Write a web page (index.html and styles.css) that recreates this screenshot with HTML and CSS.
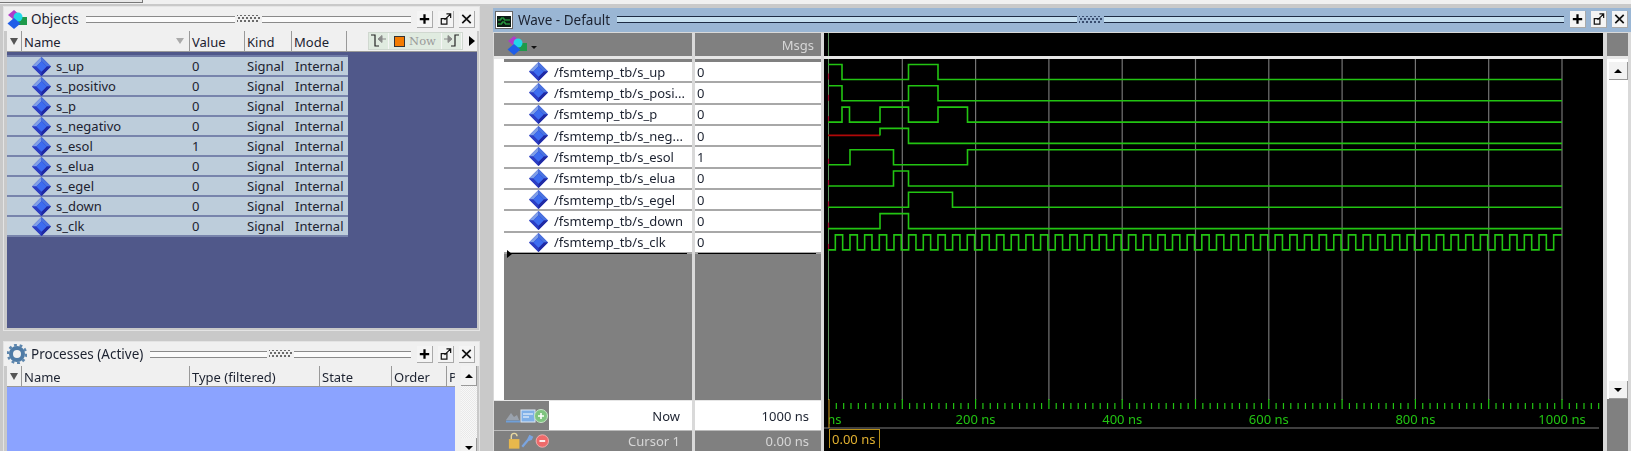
FILE: index.html
```html
<!DOCTYPE html>
<html lang="en">
  <head>
    <meta charset="UTF-8" />
    <title>Wave - Default</title>
    <link rel="stylesheet" href="styles.css">
  </head>
  <body>
    <svg class="defs" width="0" height="0">
      <symbol id="diamond" viewBox="0 0 18 18">
        <polygon points="9,0 18,9 9,18 0,9" fill="#2a35b8" />
        <polygon points="9,0 0,9 4,9 9,4" fill="#7f9fe8" />
        <polygon points="9,0 18,9 14,9 9,4" fill="#4a74e0" />
        <polygon points="0,9 9,18 9,14 4,9" fill="#2c3ec4" />
        <polygon points="18,9 9,18 9,14 14,9" fill="#1f2aa4" />
        <polygon points="9,4 14,9 9,14 4,9" fill="#3d6df0" />
      </symbol>
      <symbol id="objs" viewBox="0 0 20 20">
        <polygon points="7,1 13,6 7,11 1,6" fill="#b03cc8" />
        <rect x="11" y="8" width="9" height="8" fill="#1f9a4a" />
        <circle cx="11" cy="8" r="4.5" fill="#22d8e8" />
        <polygon points="7,9 13.5,14.5 7,20 .5,14.5" fill="#1f5ee8" />
      </symbol>
      <symbol id="plus" viewBox="0 0 16 16">
        <path d="M8 3v10M3 8h10" stroke="#000" stroke-width="2.4" fill="none" />
      </symbol>
      <symbol id="undock" viewBox="0 0 16 16">
        <path d="M3.500 7.500h6v6h-6zM7 9l6-6M9 2.500h4.500V7" stroke="#111" stroke-width="1.300" fill="none" />
      </symbol>
      <symbol id="close" viewBox="0 0 16 16">
        <path d="M3.500 3.500l9 9M12.500 3.500l-9 9" stroke="#111" stroke-width="1.800" fill="none" />
      </symbol>
    </svg>

    <div class="topstrip"><div class="toptab"></div></div>

    <div class="desk">
      <div class="leftcol">
        <section class="panel panel-objects">
          <div class="docktitle">
            <svg class="titleicon"><use href="#objs" /></svg>
            <span class="titletext">Objects</span>
            <span class="grip"></span>
            <span class="gripdots"></span>
            <span class="grip"></span>
            <span class="dockbtn"><svg><use href="#plus" /></svg></span>
            <span class="dockbtn"><svg><use href="#undock" /></svg></span>
            <span class="dockbtn"><svg><use href="#close" /></svg></span>
          </div>
          <div class="tablehead">
            <span class="th th-menu"><i class="menuarrow"></i></span>
            <span class="th th-name">Name<i class="sortarrow"></i></span>
            <span class="th th-value">Value</span>
            <span class="th th-kind">Kind</span>
            <span class="th th-mode">Mode</span>
            <div class="nowbar">
              <span class="nowbtn">
                <svg width="18" height="16" viewBox="0 0 18 16"><path d="M1 2h4v11h4" stroke="#222" stroke-width="1.200" fill="none" /><path d="M16 6h-5M8 6l4-3.500v7z" fill="#8a8a8a" stroke="#8a8a8a" /></svg>
              </span>
              <span class="nowbtn nowmid"><i class="nowsquare"></i>Now</span>
              <span class="nowbtn">
                <svg width="18" height="16" viewBox="0 0 18 16"><path d="M8 13h4V2h4" stroke="#222" stroke-width="1.200" fill="none" /><path d="M1 6h5M9 6L5 2.500v7z" fill="#8a8a8a" stroke="#8a8a8a" /></svg>
              </span>
            </div>
            <i class="moreArrow"></i>
          </div>
          <div class="objectlist">
            <div class="objrow"><svg class="diamond"><use href="#diamond" /></svg><span class="c-name">s_up</span><span class="c-value">0</span><span class="c-kind">Signal</span><span class="c-mode">Internal</span></div>
            <div class="objrow"><svg class="diamond"><use href="#diamond" /></svg><span class="c-name">s_positivo</span><span class="c-value">0</span><span class="c-kind">Signal</span><span class="c-mode">Internal</span></div>
            <div class="objrow"><svg class="diamond"><use href="#diamond" /></svg><span class="c-name">s_p</span><span class="c-value">0</span><span class="c-kind">Signal</span><span class="c-mode">Internal</span></div>
            <div class="objrow"><svg class="diamond"><use href="#diamond" /></svg><span class="c-name">s_negativo</span><span class="c-value">0</span><span class="c-kind">Signal</span><span class="c-mode">Internal</span></div>
            <div class="objrow"><svg class="diamond"><use href="#diamond" /></svg><span class="c-name">s_esol</span><span class="c-value">1</span><span class="c-kind">Signal</span><span class="c-mode">Internal</span></div>
            <div class="objrow"><svg class="diamond"><use href="#diamond" /></svg><span class="c-name">s_elua</span><span class="c-value">0</span><span class="c-kind">Signal</span><span class="c-mode">Internal</span></div>
            <div class="objrow"><svg class="diamond"><use href="#diamond" /></svg><span class="c-name">s_egel</span><span class="c-value">0</span><span class="c-kind">Signal</span><span class="c-mode">Internal</span></div>
            <div class="objrow"><svg class="diamond"><use href="#diamond" /></svg><span class="c-name">s_down</span><span class="c-value">0</span><span class="c-kind">Signal</span><span class="c-mode">Internal</span></div>
            <div class="objrow"><svg class="diamond"><use href="#diamond" /></svg><span class="c-name">s_clk</span><span class="c-value">0</span><span class="c-kind">Signal</span><span class="c-mode">Internal</span></div>
          </div>
        </section>

        <section class="panel panel-processes">
          <div class="docktitle">
            <svg class="titleicon" viewBox="0 0 20 20">
              <circle cx="10" cy="10" r="6" fill="none" stroke="#4f7ba6" stroke-width="4" />
              <circle cx="10" cy="10" r="9" fill="none" stroke="#5d86ad" stroke-width="2.500" stroke-dasharray="2.800 2.800" />
            </svg>
            <span class="titletext">Processes (Active)</span>
            <span class="grip"></span>
            <span class="gripdots"></span>
            <span class="grip"></span>
            <span class="dockbtn"><svg><use href="#plus" /></svg></span>
            <span class="dockbtn"><svg><use href="#undock" /></svg></span>
            <span class="dockbtn"><svg><use href="#close" /></svg></span>
          </div>
          <div class="procbody">
            <div class="procmain">
              <div class="tablehead">
                <span class="th th-menu"><i class="menuarrow"></i></span>
                <span class="th th-name">Name</span>
                <span class="th th-type">Type (filtered)</span>
                <span class="th th-state">State</span>
                <span class="th th-order">Order</span>
                <span class="th th-p">P</span>
              </div>
              <div class="proclist"></div>
            </div>
            <div class="vscroll">
              <span class="sbtn"><i class="tri-up"></i></span>
              <span class="strack"></span>
              <span class="sbtn"><i class="tri-down"></i></span>
            </div>
          </div>
        </section>
      </div>

      <section class="panel-wave">
        <div class="docktitle wavetitle">
          <svg class="waveicon" width="18" height="18" viewBox="0 0 18 18">
            <rect x=".5" y=".5" width="17" height="17" fill="#fff" stroke="#666" />
            <rect x="2" y="5" width="14" height="11" fill="#0c1a14" />
            <path d="M3 9h3v-2h3v2h6M3 13h4v-2h3v2h5" stroke="#2fc04a" fill="none" />
          </svg>
          <span class="titletext">Wave - Default</span>
          <span class="grip"></span>
          <span class="gripdots"></span>
          <span class="grip"></span>
          <span class="dockbtn"><svg><use href="#plus" /></svg></span>
          <span class="dockbtn"><svg><use href="#undock" /></svg></span>
          <span class="dockbtn"><svg><use href="#close" /></svg></span>
        </div>

        <div class="wavebody">
          <div class="wcol wcol-names">
            <div class="whead"><svg class="headicon"><use href="#objs" /></svg><i class="tinydown"></i></div>
            <div class="wpane">
              <div class="wgutter"></div>
              <div class="wlist">
                <div class="wrow"><svg class="diamond"><use href="#diamond" /></svg>/fsmtemp_tb/s_up</div>
                <div class="wrow"><svg class="diamond"><use href="#diamond" /></svg>/fsmtemp_tb/s_posi...</div>
                <div class="wrow"><svg class="diamond"><use href="#diamond" /></svg>/fsmtemp_tb/s_p</div>
                <div class="wrow"><svg class="diamond"><use href="#diamond" /></svg>/fsmtemp_tb/s_neg...</div>
                <div class="wrow"><svg class="diamond"><use href="#diamond" /></svg>/fsmtemp_tb/s_esol</div>
                <div class="wrow"><svg class="diamond"><use href="#diamond" /></svg>/fsmtemp_tb/s_elua</div>
                <div class="wrow"><svg class="diamond"><use href="#diamond" /></svg>/fsmtemp_tb/s_egel</div>
                <div class="wrow"><svg class="diamond"><use href="#diamond" /></svg>/fsmtemp_tb/s_down</div>
                <div class="wrow"><svg class="diamond"><use href="#diamond" /></svg>/fsmtemp_tb/s_clk</div>
                <div class="insertline"><i class="inserttri"></i></div>
              </div>
            </div>
            <div class="wfoot">
              <div class="footrow footnow">
                <span class="footicons">
                  <svg width="44" height="18" viewBox="0 0 44 18">
                    <path d="M1 13l5-7 3 4 3-2 2 5z" fill="#9aa2ad" />
                    <path d="M1 14.500h14" stroke="#6f9fd8" stroke-width="2" />
                    <rect x="16" y="3" width="14" height="12" fill="#7fb0e8" stroke="#dfe9f5" />
                    <path d="M18 7h10M18 10h6" stroke="#fff" />
                    <circle cx="36" cy="9" r="6.500" fill="#7fc47f" stroke="#c8e6c8" />
                    <path d="M36 6v6M33 9h6" stroke="#fff" stroke-width="1.600" />
                  </svg>
                </span>
                <span class="footlabel">Now</span>
              </div>
              <div class="footrow footcursor">
                <span class="footicons">
                  <svg width="44" height="18" viewBox="0 0 44 18">
                    <rect x="2" y="7" width="11" height="10" fill="#e8b84c" />
                    <path d="M4.500 7V4a3 3 0 0 1 6 0" stroke="#e8d8a0" stroke-width="1.500" fill="none" />
                    <path d="M16 15l6-7M22 8l2-4 2 1-1 2z" stroke="#7aa4e0" stroke-width="2.400" fill="none" />
                    <circle cx="37" cy="9" r="6.500" fill="#ee6a6a" stroke="#f0b0b0" />
                    <path d="M34 9h6" stroke="#fff" stroke-width="1.800" />
                  </svg>
                </span>
                <span class="footlabel">Cursor 1</span>
              </div>
            </div>
          </div>

          <div class="wcol wcol-msgs">
            <div class="whead msgshead">Msgs</div>
            <div class="wpane">
              <div class="wlist">
                <div class="vrow">0</div>
                <div class="vrow">0</div>
                <div class="vrow">0</div>
                <div class="vrow">0</div>
                <div class="vrow">1</div>
                <div class="vrow">0</div>
                <div class="vrow">0</div>
                <div class="vrow">0</div>
                <div class="vrow">0</div>
                <div class="insertline"></div>
              </div>
            </div>
            <div class="wfoot">
              <div class="footrow footnow footvalue">1000 ns</div>
              <div class="footrow footcursor footvalue">0.00 ns</div>
            </div>
          </div>

          <div class="wcol wcol-wave">
            <div class="whead wavehead"></div>
            <svg id="plot" class="plot" viewBox="824 59 779 341"></svg>
            <svg id="ruler" class="ruler" viewBox="824 400 779 51"></svg>
          </div>

          <div class="wcol wcol-scroll">
            <div class="whead"></div>
            <div class="vscroll vscroll-wave">
              <span class="sbtn"><i class="tri-up"></i></span>
              <span class="strack"></span>
              <span class="sbtn"><i class="tri-down"></i></span>
            </div>
            <div class="scrollfoot"></div>
          </div>
        </div>
      </section>
    </div>

    <script>
      // pixels of the picture: 0 ns at x=829, 1000 ns at x=1562
      let t0 = 829;
      let tEnd = 1562;
      let pasNs = (tEnd - t0) / 1000;
      let svgNs = 'http://www.w3.org/2000/svg';
      let plot = document.querySelector('#plot');
      let ruler = document.querySelector('#ruler');

      // start value, then the x of every edge
      let signaux = [
        { debut: 1, fronts: [842, 908.5, 938] },
        { debut: 1, fronts: [842, 908.5, 938] },
        { debut: 0, fronts: [842, 849.5, 880, 908.5, 938, 967.5] },
        { debut: 'x', fronts: [908.5] },
        { debut: 0, fronts: [850, 893.5, 967.5] },
        { debut: 0, fronts: [893.5, 908.5] },
        { debut: 0, fronts: [908.5, 952.5] },
        { debut: 0, fronts: [880, 908.5] },
        { debut: 0, fronts: [] }
      ];
      for (let ns = 10; ns < 1000; ns += 10) {
        signaux[8].fronts.push(t0 - 1 + ns * pasNs);
      }

      function ajout(parent, nom, attrs) {
        let el = document.createElementNS(svgNs, nom);
        for (let a in attrs) {
          el.setAttribute(a, attrs[a]);
        }
        parent.appendChild(el);
        return el;
      }

      for (let k = 1; k <= 10; k++) {
        let x = t0 + k * 100 * pasNs;
        ajout(plot, 'line', { x1: x, x2: x, y1: 59, y2: 400, class: 'gridline' });
      }
      ajout(plot, 'line', { x1: 828.5, x2: 828.5, y1: 59, y2: 400, class: 'marker' });

      signaux.forEach(function(s, i) {
        let haut = 64.5 + i * 21.3;
        let bas = haut + 15;
        let niveau = s.debut;
        let d = '';
        if (niveau === 'x') {
          ajout(plot, 'line', { x1: 828, x2: 880, y1: haut + 7, y2: haut + 7, class: 'unknown' });
          d = 'M880 ' + (haut + 7) + 'V' + haut;
          niveau = 1;
        } else {
          ajout(plot, 'line', { x1: 828.5, x2: 828.5, y1: bas - 6, y2: bas, class: 'redtick' });
          d = 'M828 ' + (niveau ? haut : bas);
        }
        s.fronts.forEach(function(f) {
          niveau = niveau ? 0 : 1;
          d += 'H' + f + 'V' + (niveau ? haut : bas);
        });
        d += 'H' + tEnd;
        ajout(plot, 'path', { d: d, class: 'trace' });
      });

      for (let ns = 10; ns <= 1050; ns += 10) {
        let x = t0 + ns * pasNs;
        let majeur = ns % 100 === 0;
        ajout(ruler, 'line', { x1: x, x2: x, y1: majeur ? 402 : 406, y2: 412, class: 'tick' });
      }
      ajout(ruler, 'line', { x1: 824, x2: 1599, y1: 431, y2: 431, class: 'rulerbase' });
      for (let ns = 0; ns <= 1000; ns += 200) {
        let label = ajout(ruler, 'text', { x: t0 + ns * pasNs, y: 427, class: 'ticklabel' });
        label.textContent = ns + ' ns';
      }
      ajout(ruler, 'rect', { x: 824, y: 414, width: 5, height: 16, class: 'labelclip' });
      ajout(ruler, 'line', { x1: 829, x2: 829, y1: 402, y2: 431, class: 'cursorline' });
      ajout(ruler, 'rect', { x: 829.5, y: 432.5, width: 50, height: 20, class: 'cursorbox' });
      let curseur = ajout(ruler, 'text', { x: 832, y: 447, class: 'cursortext' });
      curseur.textContent = '0.00 ns';
    </script>
  </body>
</html>
```

FILE: styles.css
```css
html, body {
  margin: 0;
  height: 451px;
  overflow: hidden;
}
body {
  background: #c9c9c9;
  font-family: "Noto Sans", sans-serif;
  font-size: 13px;
  color: #1c2230;
  filter: blur(0.35px);
}
.defs {
  display: block;
  height: 0;
}
svg {
  display: block;
}

/* top strip */
.topstrip {
  height: 4px;
  background: #f0f0f0;
}
.toptab {
  width: 143px;
  height: 3px;
  border-right: 1px solid #777;
  border-bottom: 1px solid #777;
  box-sizing: border-box;
  background: #e8e8e8;
}

.desk {
  display: flex;
  gap: 13px;
  height: 447px;
  padding-left: 3px;
}
.leftcol {
  display: flex;
  flex-direction: column;
  gap: 10px;
  width: 477px;
  flex: none;
  padding-top: 2px;
  box-sizing: border-box;
}

/* panels */
.panel {
  box-sizing: border-box;
  border: 1px solid #e4e4e4;
  padding: 0 2px 2px 3px;
  display: flex;
  flex-direction: column;
  overflow: hidden;
}
.panel-objects {
  height: 325px;
}
.panel-processes {
  flex: 1;
  min-height: 0;
  padding-bottom: 0;
  border-bottom: 0;
}

.docktitle {
  display: flex;
  align-items: center;
  height: 24px;
  flex: none;
  background: #f0f0f0;
  margin: 0 -2px 0 -3px;
  padding: 0 4px 0 3px;
}
.titleicon {
  width: 20px;
  height: 20px;
  flex: none;
}
.titletext {
  margin-left: 4px;
  margin-right: 7px;
  white-space: nowrap;
  font-size: 13.500px;
}
.grip {
  flex: 1;
  height: 5px;
  border-top: 1px solid #8a8a8a;
  border-bottom: 1px solid #8a8a8a;
  background: #fbfbfb;
}
.gripdots {
  width: 23px;
  height: 8px;
  margin: 0 2px;
  background-image:
    radial-gradient(circle, #666 0.7px, transparent 0.9px),
    radial-gradient(circle, #666 0.7px, transparent 0.9px);
  background-size: 4px 6px;
  background-position: 0 0, 2px 3px;
}
.dockbtn {
  flex: none;
  width: 15px;
  height: 16px;
  margin-left: 5px;
  background: #f4f4f4;
  border-right: 1px solid #aaa;
  border-bottom: 1px solid #aaa;
}
.gripdots + .grip + .dockbtn {
  margin-left: 6px;
}
.dockbtn svg {
  width: 15px;
  height: 16px;
}

/* table headers */
.tablehead {
  display: flex;
  height: 21px;
  flex: none;
  background: #f0f0f0;
  border-bottom: 1px solid #999;
  box-sizing: border-box;
}
.th {
  flex: none;
  box-sizing: border-box;
  border-right: 1px solid #999;
  line-height: 23px;
  padding-left: 2px;
  position: relative;
  overflow: hidden;
  white-space: nowrap;
}
.th-menu { width: 15px; padding: 0; }
.th-name { width: 168px; }
.th-value { width: 55px; }
.th-kind { width: 47px; }
.th-mode { width: 55px; }
.th-type { width: 130px; }
.th-state { width: 72px; }
.th-order { width: 55px; }
.th-p { width: 8px; border-right: 0; }
.menuarrow {
  position: absolute;
  left: 3px;
  top: 7px;
  border-left: 4px solid transparent;
  border-right: 4px solid transparent;
  border-top: 7px solid #555;
}
.sortarrow {
  position: absolute;
  right: 5px;
  top: 7px;
  border-left: 4px solid transparent;
  border-right: 4px solid transparent;
  border-top: 6px solid #aaa;
}
.nowbar {
  display: flex;
  margin-left: 21px;
  height: 18px;
  margin-top: 1px;
  background: #e0ebe0;
  border: 1px solid #d0d8d0;
  box-sizing: border-box;
  color: #9a9a9a;
}
.nowbtn {
  display: flex;
  align-items: center;
  justify-content: center;
  width: 20px;
  border-right: 1px solid #f6f6f6;
  box-sizing: border-box;
}
.nowmid {
  width: 53px;
  font-family: "DejaVu Serif", serif;
  font-size: 11.500px;
  gap: 4px;
}
.nowsquare {
  width: 9px;
  height: 9px;
  background: #f47b00;
  border: 1px solid #333;
}
.moreArrow {
  margin: 5px 0 0 6px;
  border-top: 5px solid transparent;
  border-bottom: 5px solid transparent;
  border-left: 6px solid #000;
  height: 0;
}

/* objects */
.objectlist {
  flex: 1;
  background: #50588a;
  padding-top: 5px;
}
.objrow {
  display: flex;
  align-items: center;
  width: 341px;
  height: 18px;
  background: #bdcddb;
  border-bottom: 2px solid #7884ac;
}
.objrow:first-child {
  box-shadow: 0 -2px 0 #6f7ba6;
}
.diamond {
  width: 19px;
  height: 19px;
  flex: none;
  overflow: visible;
}
.objrow .diamond {
  margin-left: 25px;
}
.c-name {
  width: 134px;
  margin-left: 5px;
  flex: none;
}
.c-value {
  width: 55px;
  flex: none;
  padding-left: 2px;
  box-sizing: border-box;
}
.c-kind {
  width: 47px;
  flex: none;
  padding-left: 2px;
  box-sizing: border-box;
}
.c-mode {
  flex: none;
  padding-left: 3px;
}

/* processes */
.procbody {
  flex: 1;
  display: flex;
  min-height: 0;
}
.procmain {
  width: 448px;
  flex: none;
  display: flex;
  flex-direction: column;
}
.proclist {
  flex: 1;
  background: #8ba3ff;
}
.vscroll {
  flex: 1;
  display: flex;
  flex-direction: column;
  padding-left: 6px;
  background: #f0f0f0;
}
.sbtn {
  height: 19px;
  flex: none;
  background: #f2f2f2;
  border-right: 1px solid #999;
  border-bottom: 1px solid #999;
  display: flex;
  align-items: center;
  justify-content: center;
}
.strack {
  flex: none;
  height: 52px;
  background-image: repeating-conic-gradient(#e9e9e9 0 25%, #f8f8f8 0 50%);
  background-size: 2px 2px;
}
.tri-up {
  border-left: 4px solid transparent;
  border-right: 4px solid transparent;
  border-bottom: 4px solid #000;
}
.tri-down {
  border-left: 4px solid transparent;
  border-right: 4px solid transparent;
  border-top: 4px solid #000;
}

/* wave */
.panel-wave {
  width: 1138px;
  flex: none;
  padding-top: 4px;
  display: flex;
  flex-direction: column;
  box-sizing: border-box;
}
.wavetitle {
  height: 24px;
  background: #9ab6d4;
  margin: 0;
  padding: 0 3px 1px 2px;
  box-sizing: border-box;
}
.wavetitle .titletext {
  margin-left: 5px;
}
.wavetitle .grip {
  border-color: #1d2c44;
  background: #c6e0f0;
}
.wavetitle .gripdots {
  background-image:
    radial-gradient(circle, #34486a 0.7px, transparent 0.9px),
    radial-gradient(circle, #34486a 0.7px, transparent 0.9px);
}
.waveicon {
  flex: none;
}
.wavebody {
  display: flex;
  gap: 3px;
  flex: 1;
  min-height: 0;
  padding: 1px 0 0 1px;
  background: #d9d9d9;
}
.wcol {
  display: flex;
  flex-direction: column;
  flex: none;
}
.wcol-names { width: 198px; }
.wcol-msgs { width: 126px; }
.wcol-wave { width: 779px; background: #000; }
.wcol-scroll { width: 21px; margin-left: 1px; }

.whead {
  height: 23px;
  flex: none;
  background: #808080;
  display: flex;
  align-items: center;
  box-sizing: border-box;
}
.wavehead {
  background: #000;
  position: relative;
}
.wavehead::before {
  content: '';
  position: absolute;
  left: 4px;
  top: 0;
  bottom: 0;
  width: 1px;
  background: #5f8f5f;
}
.headicon {
  width: 20px;
  height: 20px;
  margin-left: 13px;
}
.tinydown {
  margin: 5px 0 0 4px;
  border-left: 3px solid transparent;
  border-right: 3px solid transparent;
  border-top: 3px solid #111;
}
.msgshead {
  justify-content: flex-end;
  padding-right: 7px;
  color: #d6d6d6;
}
.wpane {
  flex: 1;
  display: flex;
  min-height: 0;
  background: #808080;
  border-top: 3px solid #e6e6e6;
}
.wgutter {
  width: 10px;
  background: #fff;
  flex: none;
}
.wlist {
  flex: 1;
  padding-top: 3px;
}
.wrow, .vrow {
  height: 21.330px;
  box-sizing: border-box;
  background: #fff;
  border-bottom: 2px solid #a8a8a8;
  display: flex;
  align-items: center;
  white-space: nowrap;
}
.wrow .diamond {
  margin: 0 6px 0 25px;
}
.vrow {
  padding-left: 2px;
}
.insertline {
  height: 1px;
  margin: -1px 5px 0 3px;
  background: #000;
  position: relative;
}
.inserttri {
  position: absolute;
  left: 0;
  top: -3px;
  border-top: 4px solid transparent;
  border-bottom: 4px solid transparent;
  border-left: 5px solid #000;
}
.wfoot {
  flex: none;
  height: 51px;
  display: flex;
  flex-direction: column;
  border-top: 1px solid #e6e6e6;
  box-sizing: border-box;
}
.footrow {
  display: flex;
  align-items: center;
  flex: none;
}
.footnow {
  height: 30px;
  background: #fff;
  border-bottom: 1px solid #bbb;
  box-sizing: border-box;
}
.footcursor {
  flex: 1;
  background: #808080;
  color: #d6d6d6;
}
.footicons {
  width: 55px;
  height: 100%;
  flex: none;
  display: flex;
  align-items: center;
  background: #808080;
  box-sizing: border-box;
  padding-left: 11px;
}
.footcursor .footicons {
  padding-left: 13px;
}
.footlabel {
  flex: 1;
  text-align: right;
  padding-right: 12px;
}
.footvalue {
  justify-content: flex-end;
  padding-right: 12px;
}
.plot {
  width: 779px;
  height: 341px;
  flex: none;
  border-top: 3px solid #e6e6e6;
  overflow: hidden;
}
.ruler {
  width: 779px;
  height: 51px;
  flex: none;
  margin-top: -3px;
  font-family: "Noto Sans", sans-serif;
}
.gridline {
  stroke: #757575;
  stroke-width: 1.2;
}
.marker {
  stroke: #5f8f5f;
  stroke-width: 1;
}
.redtick {
  stroke: #a01030;
  stroke-width: 1.2;
}
.trace {
  fill: none;
  stroke: #22c412;
  stroke-width: 1.600;
}
.unknown {
  stroke: #b00808;
  stroke-width: 1.800;
}
.tick {
  stroke: #22c412;
  stroke-width: 1.200;
}
.rulerbase {
  stroke: #555;
  stroke-width: 1.4;
}
.cursorline {
  stroke: #d8a020;
  stroke-width: 1;
}
.ticklabel {
  fill: #22c412;
  font-size: 13px;
  text-anchor: middle;
}
.labelclip {
  fill: #000;
}
.cursorbox {
  fill: none;
  stroke: #b89018;
}
.cursortext {
  fill: #e0b030;
  font-size: 13px;
}
.scrollfoot {
  height: 52px;
  flex: none;
  background: #808080;
}
.vscroll-wave {
  background: #fff;
  padding-left: 2px;
  border-top: 3px solid #e6e6e6;
  min-height: 0;
}
.vscroll-wave .sbtn {
  height: 17px;
  margin-top: 3px;
}
.vscroll-wave .strack {
  flex: 1;
  background: #fff;
}
```
